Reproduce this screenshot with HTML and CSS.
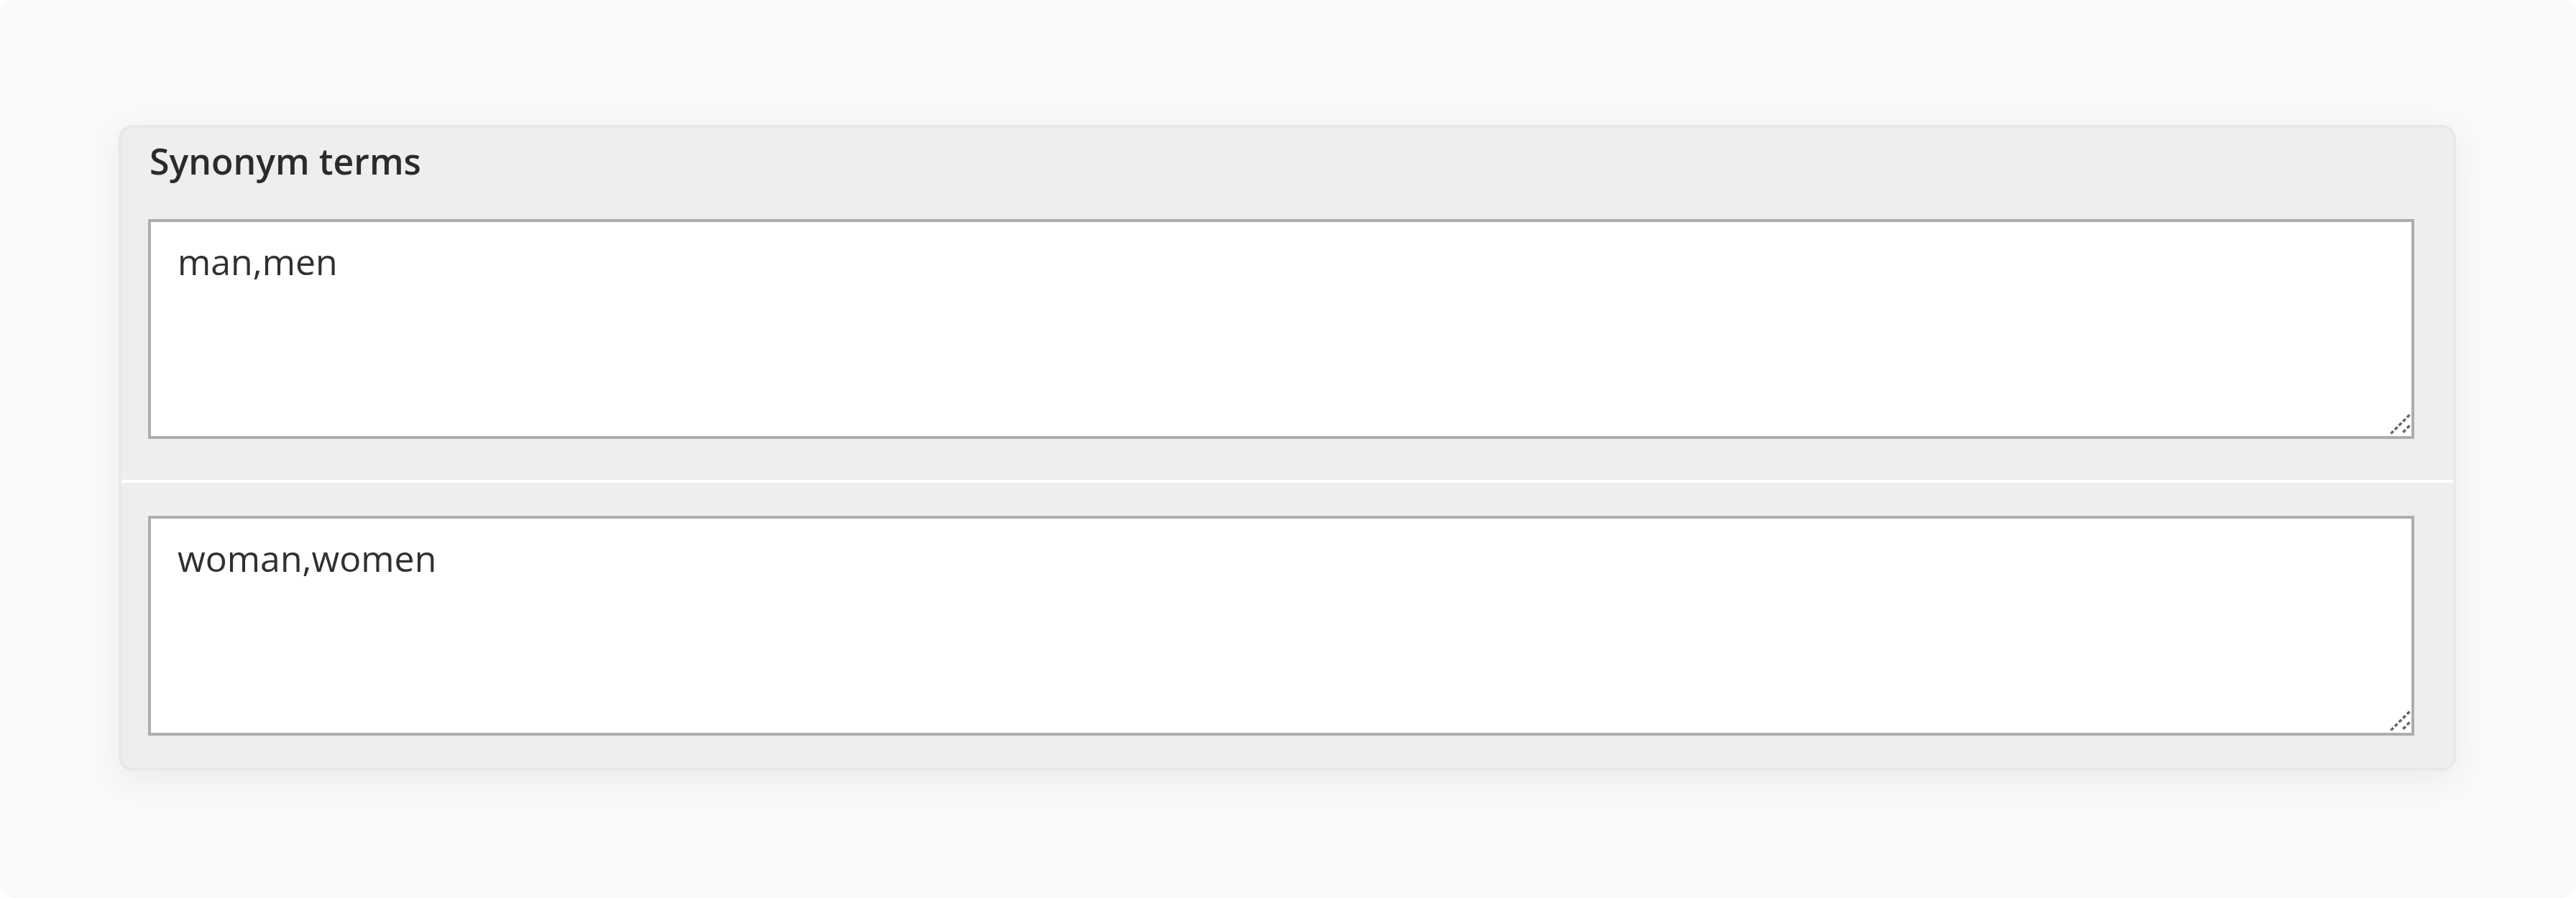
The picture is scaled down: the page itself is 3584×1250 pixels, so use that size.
FILE: index.html
```html
<!DOCTYPE html>
<html lang="en">
<head>
  <meta charset="UTF-8">
  <meta name="viewport" content="width=device-width, initial-scale=1">
  <title>Synonym terms</title>
  <link rel="stylesheet" href="styles.css">
</head>
<body>
  <div class="page">
    <fieldset class="card">
      <div class="card-head">Synonym terms</div>

      <div class="field">
        <div class="input-wrap">
          <textarea class="terms" name="synonyms[0]">man,men</textarea>
          <svg class="resizer" width="32" height="32" viewBox="0 0 32 32">
            <line x1="29.5" y1="2.5" x2="3.5" y2="28.5" />
            <line x1="29.5" y1="17.5" x2="18.5" y2="28.5" />
          </svg>
        </div>
      </div>

      <div class="field">
        <div class="input-wrap">
          <textarea class="terms" name="synonyms[1]">woman,women</textarea>
          <svg class="resizer" width="32" height="32" viewBox="0 0 32 32">
            <line x1="29.5" y1="2.5" x2="3.5" y2="28.5" />
            <line x1="29.5" y1="17.5" x2="18.5" y2="28.5" />
          </svg>
        </div>
      </div>
    </fieldset>
  </div>
</body>
</html>
```

FILE: styles.css
```css
* {
  box-sizing: border-box;
  margin: 0;
  padding: 0;
}

body {
  font-family: 'Open Sans', 'Liberation Sans', sans-serif;
  background: #ffffff;
  color: #303030;
}

.page {
  height: 1250px;
  padding: 174px 167px 0 165px;
  background: #f9f9f9;
  border-radius: 20px;
}

.card {
  border: 4px solid #e8e8e8;
  border-radius: 20px;
  background: #eeeeee;
  box-shadow: 0 12px 44px rgba(0, 0, 0, 0.06);
}

.card-head {
  padding: 13px 54px 0 39px;
  font-size: 50px;
  font-weight: 600;
  line-height: 67px;
  color: #2b2b2b;
}

.field {
  padding: 47px 54px 57px 37px;
}

.field + .field {
  border-top: 4px solid #ffffff;
  padding: 46px 54px 45px 37px;
}

.input-wrap {
  position: relative;
}

.terms {
  display: block;
  width: 100%;
  height: 306px;
  padding: 21px 35px 21px 37px;
  border: 4px solid #adadad;
  border-radius: 0;
  background: #ffffff;
  font-family: 'Open Sans', 'Liberation Sans', sans-serif;
  font-size: 50px;
  line-height: 1.36;
  color: #303030;
  resize: none;
  outline: none;
}

.resizer {
  position: absolute;
  right: 4px;
  bottom: 4px;
}

.resizer line {
  stroke: #666666;
  stroke-width: 3.5;
  stroke-dasharray: 5 3;
}
```
